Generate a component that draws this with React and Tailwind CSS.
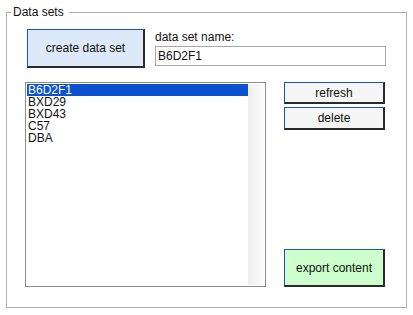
import React, { useState } from "react";

const sets = ["B6D2F1", "BXD29", "BXD43", "C57", "DBA"];

const btn =
  "border-t border-l border-t-[#1d4fc4] border-l-[#1d4fc4] border-r-2 border-b-2 border-r-[#2a2a2a] border-b-[#2a2a2a] text-[12px] text-[#111] flex items-center justify-center";

const App = () => {
  const [selected, setSelected] = useState("B6D2F1");
  const [name, setName] = useState("B6D2F1");

  return (
    <div
      className="w-[413px] h-[315px] bg-white pt-[5px] pl-[6px]"
      style={{ fontFamily: '"Liberation Sans", Arial, sans-serif' }}
    >
      <fieldset className="w-[401px] h-[303px] border border-[#b0b0b0] pl-[20px] pr-[20px]">
        <legend className="-ml-[16px] pl-[2px] pr-[5px] text-[12px] leading-[15px] text-[#111]">
          Data sets
        </legend>

        {/* top row */}
        <div className="flex mt-[9px] gap-[10px]">
          <button className={`${btn} w-[118px] h-[39px] bg-[#dde8f8]`}>
            create data set
          </button>
          <div className="flex flex-col w-[231px]">
            <label className="text-[12px] leading-[15px] text-[#111] mt-[1px]">
              data set name:
            </label>
            <input
              value={name}
              onChange={(e) => setName(e.target.value)}
              className="mt-[1px] h-[20px] w-[231px] border border-[#a8a8a8] px-[2px] text-[12px] text-[#111] outline-none"
            />
          </div>
        </div>

        {/* bottom row */}
        <div className="flex mt-[14px] -ml-[2px]">
          <div className="w-[241px] h-[205px] border border-[#8c8c8c] flex p-[1px]">
            <div className="flex-1 flex flex-col">
              {sets.map((s) => (
                <div
                  key={s}
                  onClick={() => setSelected(s)}
                  className={`text-[12px] leading-[12px] h-[12px] pl-[1px] ${
                    selected === s ? "bg-[#0b52d1] text-white" : "text-[#111]"
                  }`}
                >
                  {s}
                </div>
              ))}
            </div>
            <div className="w-[16px] bg-gradient-to-r from-[#efefef] to-[#fbfbfb]" />
          </div>

          <div className="flex flex-col ml-[18px] w-[101px]">
            <button className={`${btn} h-[22px] bg-[#f5f5f5]`}>refresh</button>
            <button className={`${btn} h-[23px] mt-[3px] bg-[#f5f5f5]`}>delete</button>
            <button className={`${btn} h-[38px] mt-auto bg-[#ccffcc]`}>
              export content
            </button>
          </div>
        </div>
      </fieldset>
    </div>
  );
};

export default App;
